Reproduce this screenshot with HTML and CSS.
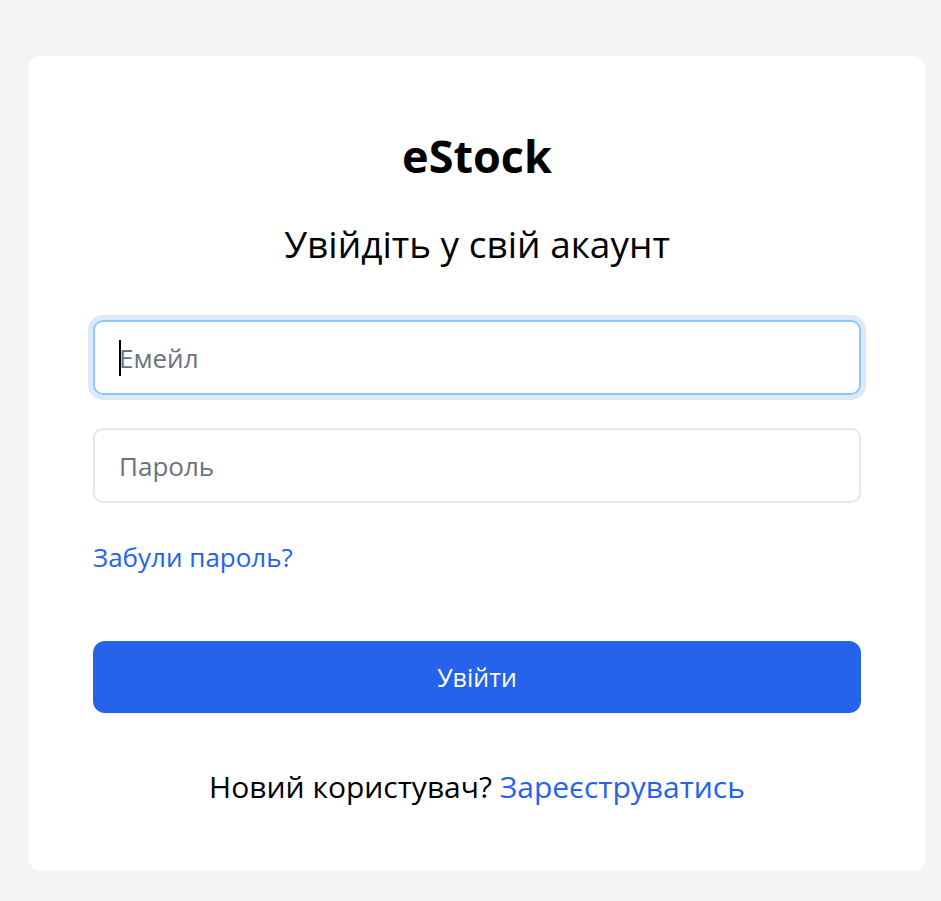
FILE: index.html
```html
<!DOCTYPE html>
<html lang="uk">
    <head>
        <meta charset="UTF-8" />
        <meta name="viewport" content="width=device-width, initial-scale=1.0" />
        <title>eStock</title>
        <link rel="stylesheet" href="styles.css">
    </head>
    <body>
        <div class="card">
            <h1 class="logo">eStock</h1>
            <h2 class="subtitle">Увійдіть у свій акаунт</h2>
            <form class="login-form" onsubmit="return false;">
                <div class="field field-focus">
                    <span class="caret"></span>
                    <span class="placeholder">Емейл</span>
                </div>
                <div class="field">
                    <span class="placeholder">Пароль</span>
                </div>
                <a class="forgot" href="#">Забули пароль?</a>
                <button class="submit" type="submit">Увійти</button>
            </form>
            <p class="register">Новий користувач? <a href="#">Зареєструватись</a></p>
        </div>
    </body>
</html>
```

FILE: styles.css
```css
body {
    font-family: "Open Sans", "Noto Sans", sans-serif;
    background-color: #f3f4f6;
    margin: 0;
    padding: 56px 16px 30px 29px;
}
.card {
    background-color: #fff;
    border-radius: 12px;
    padding: 64px;
    display: flex;
    flex-direction: column;
}
.logo {
    margin: 0;
    font-size: 45px;
    font-weight: 700;
    line-height: 72px;
    text-align: center;
    color: #000;
}
.subtitle {
    margin: 26px 0 0;
    font-size: 37px;
    font-weight: 400;
    line-height: 52px;
    text-align: center;
    color: #000;
}
.login-form {
    display: flex;
    flex-direction: column;
    margin-top: 50px;
}
.field {
    height: 71px;
    border: 2px solid #e5e7eb;
    border-radius: 10px;
    padding: 0 24px;
    display: flex;
    align-items: center;
    font-size: 26px;
    color: #6b7280;
}
.field + .field {
    margin-top: 33px;
}
.field-focus {
    border-color: #93c5fd;
    box-shadow: 0 0 0 5px #dbe9fd;
}
.caret {
    width: 2px;
    height: 36px;
    background-color: #000;
    margin-right: -2px;
}
.forgot {
    align-self: flex-start;
    margin-top: 38px;
    font-size: 26px;
    line-height: 32px;
    color: #2563eb;
    text-decoration: none;
}
.submit {
    margin-top: 68px;
    height: 72px;
    border: none;
    border-radius: 12px;
    background-color: #2563eb;
    color: #fff;
    font-family: inherit;
    font-size: 25px;
    font-weight: 500;
    cursor: pointer;
}
.register {
    margin: 54px 0 0;
    font-size: 30px;
    line-height: 40px;
    text-align: center;
    color: #000;
}
.register a {
    color: #2563eb;
    text-decoration: none;
}
```
